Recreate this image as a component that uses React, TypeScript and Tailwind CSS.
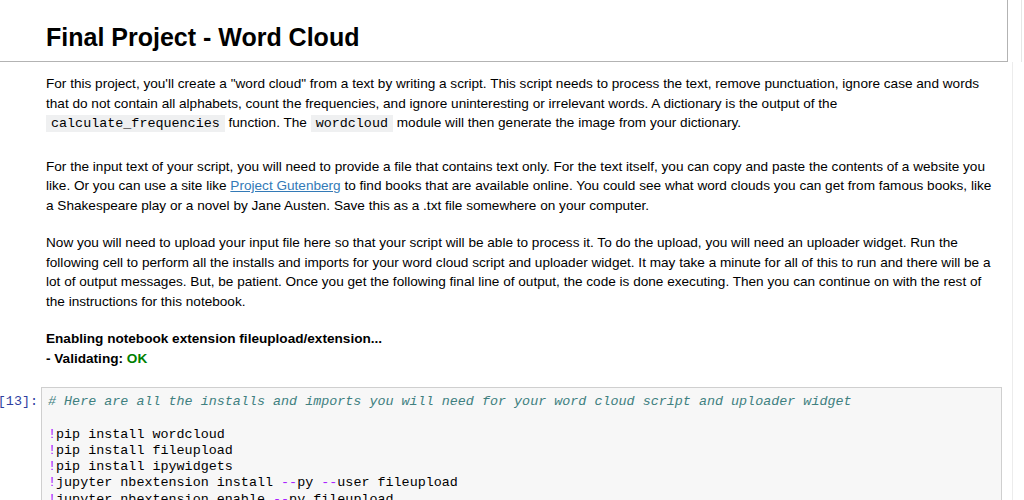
export default function App() {
  const mono = "font-['Liberation_Mono','DejaVu_Sans_Mono',monospace]";
  const inline = `${mono} bg-[#eff0f1] px-[5px] py-[1px] text-[13.4px] leading-none`;
  const bang = <span className="text-[#aa22ff]">!</span>;
  const dash = <span className="text-[#aa22ff]">--</span>;

  return (
    <div className="w-[1024px] h-[500px] overflow-hidden bg-white flex flex-col font-['Liberation_Sans',Arial,sans-serif] text-black">
      {/* Title cell */}
      <div className="flex shrink-0">
        <div className="w-[1008px] h-[62px] border-r border-b border-[#b3b3b3] pl-[46px] pt-[25px]">
          <h1 className="text-[25px] font-bold leading-[25px]">Final Project - Word Cloud</h1>
        </div>
        <div className="w-[14px] border-r border-[#e6e6e6]" />
      </div>

      {/* Body */}
      <div className="w-[1013px] flex-1 border-r border-[#ececec]">
        <div className="pl-[46px] w-[994px] text-[13.6px] leading-[19.5px] pt-[12px]">
          <p>
            For this project, you'll create a "word cloud" from a text by writing a script. This script needs to process the text, remove punctuation, ignore case and words that do not contain all alphabets, count the frequencies, and ignore uninteresting or irrelevant words. A dictionary is the output of the{' '}
            <code className={inline}>calculate_frequencies</code> function. The <code className={inline}>wordcloud</code> module will then generate the image from your dictionary.
          </p>
          <p className="mt-[24px]">
            For the input text of your script, you will need to provide a file that contains text only. For the text itself, you can copy and paste the contents of a website you like. Or you can use a site like{' '}
            <a className="text-[#337ab7] underline">Project Gutenberg</a> to find books that are available online. You could see what word clouds you can get from famous books, like a Shakespeare play or a novel by Jane Austen. Save this as a .txt file somewhere on your computer.
          </p>
          <p className="mt-[18px]">
            Now you will need to upload your input file here so that your script will be able to process it. To do the upload, you will need an uploader widget. Run the following cell to perform all the installs and imports for your word cloud script and uploader widget. It may take a minute for all of this to run and there will be a lot of output messages. But, be patient. Once you get the following final line of output, the code is done executing. Then you can continue on with the rest of the instructions for this notebook.
          </p>
          <p className="mt-[18px] font-bold">
            Enabling notebook extension fileupload/extension...
            <br />- Validating: <span className="text-[#008000]">OK</span>
          </p>
        </div>

        {/* Code cell */}
        <div className="flex mt-[19px]">
          <div className={`w-[41px] shrink-0 flex justify-end overflow-hidden pr-[3px] pt-[7px] ${mono} text-[13.4px] leading-[16.3px] text-[#303f9f] whitespace-nowrap`}>
            In&nbsp;[13]:
          </div>
          <div className={`w-[961px] border border-[#cfcfcf] bg-[#f7f7f7] pl-[6px] pt-[6px] pb-[6px] ${mono} text-[13.4px] leading-[16.3px] whitespace-pre`}>
            <div className="italic text-[#408080]"># Here are all the installs and imports you will need for your word cloud script and uploader widget</div>
            <div>&nbsp;</div>
            <div>{bang}pip install wordcloud</div>
            <div>{bang}pip install fileupload</div>
            <div>{bang}pip install ipywidgets</div>
            <div>{bang}jupyter nbextension install {dash}py {dash}user fileupload</div>
            <div>{bang}jupyter nbextension enable {dash}py fileupload</div>
          </div>
        </div>
      </div>
    </div>
  );
}
